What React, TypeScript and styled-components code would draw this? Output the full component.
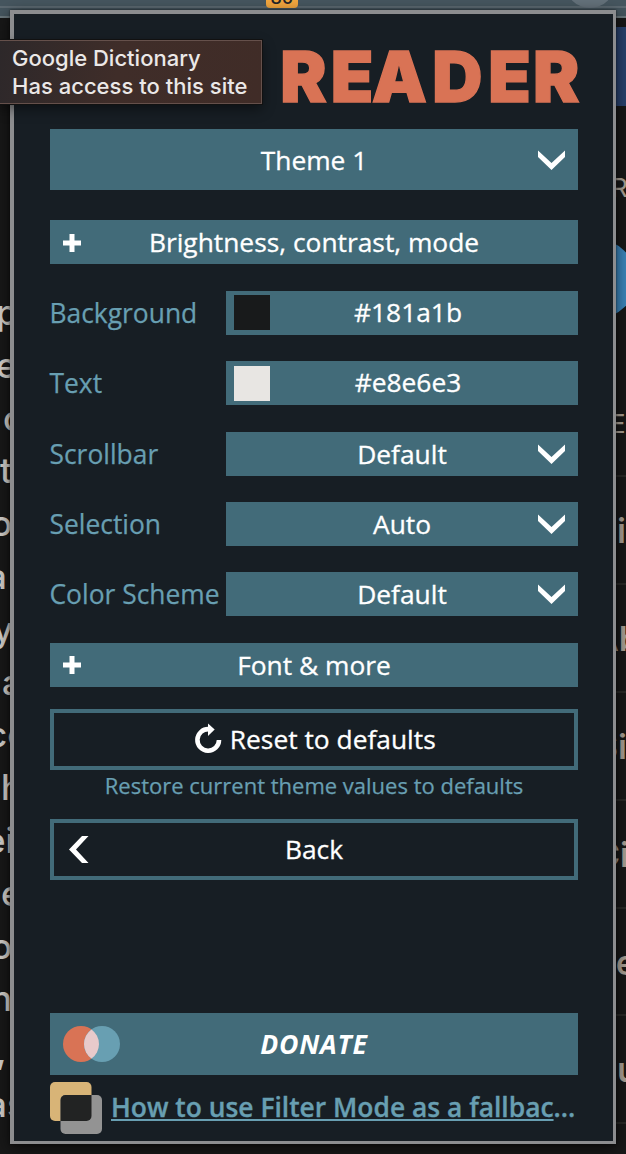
import React from 'react';
import styled, { createGlobalStyle } from 'styled-components';

const GlobalStyle = createGlobalStyle`
  * { box-sizing: border-box; }
  html, body { margin: 0; padding: 0; background: #181a1b; }
  body { overflow: hidden; }
`;

const teal = '#426b79';
const sky = '#689fb2';
const coral = '#d97355';

const Screen = styled.div`
  position: relative;
  width: 626px;
  height: 1154px;
  overflow: hidden;
  background: #181818;
  font-family: 'Open Sans', 'Noto Sans', sans-serif;
`;

const BrowserBar = styled.div`
  position: relative;
  height: 18px;
  background: linear-gradient(#46565f 0 6px, #5c6971 6px 8px, #45555e 8px 16px, #6a777c 16px 18px);
  overflow: hidden;
`;

const Badge = styled.div`
  position: absolute;
  left: 266px;
  top: -14px;
  width: 32px;
  height: 22px;
  border-radius: 4px;
  background: #f3a73f;
  color: #22252a;
  font: 500 18px/23px Inter, sans-serif;
  text-align: center;
`;

const Avatar = styled.div`
  position: absolute;
  left: 565px;
  top: -42px;
  width: 50px;
  height: 50px;
  border-radius: 50%;
  background: #64717a;
`;

const PageBody = styled.div`
  display: flex;
  justify-content: space-between;
  height: 1136px;
`;

const Article = styled.div`
  width: 30px;
  padding-top: 268px;
  overflow: hidden;
  color: #d1cdc7;
  font: 500 35px/52.8px Inter, sans-serif;
`;

const ArticleLine = styled.div<{ $shift: number }>`
  height: 52.8px;
  margin-left: ${(p) => p.$shift}px;
  white-space: nowrap;
`;

const Sidebar = styled.div`
  width: 30px;
  overflow: hidden;
  color: #a89f94;
  font-family: Inter, sans-serif;
`;

const BlueBanner = styled.div`
  height: 79px;
  margin-top: 9px;
  background: #29426e;
`;

const SideHeading = styled.div<{ $gap: number; $shift: number }>`
  height: 30px;
  margin: ${(p) => p.$gap}px 0 0 ${(p) => p.$shift}px;
  font-size: 26px;
  line-height: 30px;
  white-space: nowrap;
`;

const BlueDisc = styled.div`
  width: 80px;
  height: 80px;
  margin: 36px 0 0 -40px;
  border-radius: 50%;
  background: #3b84b9;
`;

const SideList = styled.div`
  margin-top: 36px;
`;

const SideItem = styled.div<{ $shift: number }>`
  height: 107.9px;
  border-top: 2px solid #292927;
  font-size: 34px;
  font-weight: 600;
  line-height: 107px;
  text-indent: ${(p) => p.$shift}px;
  white-space: nowrap;
`;

const Popup = styled.main`
  position: absolute;
  left: 10px;
  top: 10px;
  width: 606px;
  height: 1134px;
  padding: 32px 35px 0 36px;
  border: solid #8c8d8f;
  border-width: 4px 3px 3px 4px;
  background: #171e24;
  box-shadow: 0 0 2px #0009, 0 4px 14px #0009;
  display: flex;
  flex-direction: column;
`;

const Logo = styled.h1`
  height: 64px;
  margin: 0 0 19px;
  display: flex;
  justify-content: flex-end;
  color: ${coral};
  svg { display: block; overflow: visible; }
`;

const Button = styled.button<{ $height: number; $outline?: boolean; $gap: number }>`
  position: relative;
  flex: none;
  display: flex;
  align-items: center;
  justify-content: center;
  width: 100%;
  height: ${(p) => p.$height}px;
  margin: 0 0 ${(p) => p.$gap}px;
  padding: 0;
  border: ${(p) => (p.$outline ? `4px solid ${teal}` : '0')};
  background: ${(p) => (p.$outline ? '#171e24' : teal)};
  color: #fff;
  font: 400 26.35px/36px 'Open Sans', sans-serif;
  -webkit-text-stroke: 0.3px currentColor;
  white-space: nowrap;
`;

const IconSlot = styled.span<{ $left?: number; $right?: number }>`
  position: absolute;
  top: 0;
  bottom: 0;
  ${(p) => (p.$left !== undefined ? `left: ${p.$left}px;` : '')}
  ${(p) => (p.$right !== undefined ? `right: ${p.$right}px;` : '')}
  display: flex;
  align-items: center;
`;

const Settings = styled.div`
  display: flex;
  flex-direction: column;
  gap: 26.33px;
  margin-bottom: 26.6px;
`;

const Setting = styled.div`
  display: grid;
  grid-template-columns: 176px 352px;
  height: 44px;
`;

const Label = styled.label`
  margin-left: -0.5px;
  color: ${sky};
  font-size: 26.4px;
  line-height: 44px;
  -webkit-text-stroke: 0.25px currentColor;
  white-space: nowrap;
`;

const ColorField = styled.div`
  display: flex;
  height: 44px;
  padding-left: 8px;
  background: ${teal};
`;

const Swatch = styled.span<{ $color: string }>`
  width: 36px;
  height: 35px;
  margin-top: 4.4px;
  background: ${(p) => p.$color};
`;

const ColorValue = styled.span`
  flex: 1;
  padding-right: 32px;
  color: #fff;
  font-size: 26.35px;
  line-height: 43px;
  -webkit-text-stroke: 0.3px currentColor;
  text-align: center;
`;

const ResetIcon = styled.svg`
  margin: 0 7.5px 0 2px;
`;

const Hint = styled.p`
  height: 49px;
  margin: 0;
  color: ${sky};
  font-size: 22px;
  line-height: 31px;
  -webkit-text-stroke: 0.25px currentColor;
  text-align: center;
  white-space: nowrap;
`;

const Spacer = styled.div`
  flex: 1;
`;

const DonateText = styled.span`
  font-size: 26.6px;
  font-weight: 700;
  font-style: italic;
  letter-spacing: 0.8px;
  -webkit-text-stroke: 0;
`;

const NewsRow = styled.div`
  display: flex;
  height: 59px;
  gap: 9px;
`;

const NewsLink = styled.a`
  flex: 1;
  color: ${sky};
  font-size: 26.4px;
  font-weight: 600;
  line-height: 50px;
  -webkit-text-stroke: 0.35px currentColor;
  white-space: nowrap;
`;

const Underlined = styled.span`
  text-decoration: underline;
  text-decoration-thickness: 2px;
  text-underline-offset: 2px;
  text-decoration-skip-ink: none;
`;

const Tooltip = styled.div`
  position: absolute;
  left: -1px;
  top: 40px;
  width: 263px;
  height: 64px;
  padding: 3px 0 0 12px;
  border: 1px solid #65504b;
  background: linear-gradient(100deg, #2d282a, #3f2d29 45%, #402c27);
  box-shadow: 0 0 0 1px #111, 0 5px 12px #0007;
  color: #ebe8e7;
  font: 500 22px/28px Inter, sans-serif;
  white-space: nowrap;
`;

const TooltipLine = styled.div<{ $spacing: number }>`
  letter-spacing: ${(p) => p.$spacing}px;
`;

const Chevron = () => (
  <IconSlot $right={13}>
    <svg width="27" height="20" viewBox="0 0 27 20">
      <path d="M0 0.5L13.5 13L27 0.5V7L13.5 20L0 7Z" fill="#fff" />
    </svg>
  </IconSlot>
);

const Plus = () => (
  <IconSlot $left={13}>
    <svg width="18" height="19" viewBox="0 -1 18 19">
      <path d="M6.5 0H11.5V6.5H18V11.5H11.5V18H6.5V11.5H0V6.5H6.5Z" fill="#fff" />
    </svg>
  </IconSlot>
);

const articleLines: [string, number][] = [
  ['p', -4], ['e', -4], ['c', 3], ['t', 0], ['o', -9], ['a', -13], ['y', -7], ['a', 2],
  ['co', -13], ['h', 1], ['ei', -15], ['e', 1], ['o', -9], ['n', -9], [',', -4], ['as', -13],
];

const sideItems: [string, number][] = [
  ['Fi', 1], ['Ab', -2], ['Si', 0], ['Ci', -1], ['Re', -2], ['Pu', -1], ['', 0],
];

const colors: [string, string][] = [['Background', '#181a1b'], ['Text', '#e8e6e3']];
const selects: [string, string][] = [['Scrollbar', 'Default'], ['Selection', 'Auto'], ['Color Scheme', 'Default']];

export default function App() {
  return (
    <Screen>
      <GlobalStyle />
      <BrowserBar>
        <Badge>80</Badge>
        <Avatar />
      </BrowserBar>
      <PageBody>
        <Article>
          {articleLines.map(([text, shift], i) => (
            <ArticleLine key={i} $shift={shift}>{text}</ArticleLine>
          ))}
        </Article>
        <Sidebar>
          <BlueBanner />
          <SideHeading $gap={67} $shift={15}>R</SideHeading>
          <BlueDisc />
          <SideHeading $gap={90} $shift={14}>E</SideHeading>
          <SideList>
            {sideItems.map(([text, shift], i) => (
              <SideItem key={i} $shift={shift}>{text}</SideItem>
            ))}
          </SideList>
        </Sidebar>
      </PageBody>

      <Popup>
        <Logo>
          <svg width="300" height="64">
            <text x={[2.4, 53.3, 94.6, 155.8, 212.4, 257.6]} y="55.6" fill={coral} stroke={coral} strokeWidth="1.4"
              fontFamily="Inter" fontWeight="900" fontSize="70.2" transform="scale(0.99 1)">READER</text>
          </svg>
        </Logo>
        <Button $height={61} $gap={30}>Theme 1<Chevron /></Button>
        <Button $height={44} $gap={27}><Plus />Brightness, contrast, mode</Button>
        <Settings>
          {colors.map(([label, value]) => (
            <Setting key={label}>
              <Label>{label}</Label>
              <ColorField>
                <Swatch $color={value} />
                <ColorValue>{value}</ColorValue>
              </ColorField>
            </Setting>
          ))}
          {selects.map(([label, value]) => (
            <Setting key={label}>
              <Label>{label}</Label>
              <Button $height={44} $gap={0}>{value}<Chevron /></Button>
            </Setting>
          ))}
        </Settings>
        <Button $height={44} $gap={22}><Plus />Font &amp; more</Button>
        <Button $height={61} $gap={0} $outline>
          <ResetIcon width="28" height="32" viewBox="0 0 28 32">
            <path d="M15 6.2A10.8 10.8 0 1 0 25 17" fill="none" stroke="#fff" strokeWidth="4.6" />
            <path d="M14 0.5L20.7 6.5L14 13Z" fill="#fff" />
          </ResetIcon>
          Reset to defaults
        </Button>
        <Hint>Restore current theme values to defaults</Hint>
        <Button $height={61} $gap={0} $outline>
          <IconSlot $left={15}>
            <svg width="20" height="27" viewBox="0 0 20 27">
              <path d="M13 0H19.5L7 13.5L19.5 27H13L0 13.5Z" fill="#fff" />
            </svg>
          </IconSlot>
          Back
        </Button>
        <Spacer />
        <Button $height={62} $gap={7}>
          <IconSlot $left={13}>
            <svg width="57" height="36" viewBox="0 0 57 36">
              <circle cx="18" cy="18" r="18" fill={coral} />
              <circle cx="39" cy="18" r="18" fill={sky} />
              <path d="M28.5 3.4A18 18 0 0 1 28.5 32.6A18 18 0 0 1 28.5 3.4Z" fill="#e8cacb" />
            </svg>
          </IconSlot>
          <DonateText>DONATE</DonateText>
        </Button>
        <NewsRow>
          <svg width="52" height="52" viewBox="0 0 52 52">
            <rect width="41.5" height="39" rx="5" fill="#d8b477" />
            <rect x="10.5" y="13" width="41.5" height="39" rx="5" fill="#939393" />
            <path d="M15.5 13H41.5V34A5 5 0 0 1 36.5 39H10.5V18A5 5 0 0 1 15.5 13Z" fill="#222323" />
          </svg>
          <NewsLink><Underlined>How to use Filter Mode as a fallbac</Underlined>...</NewsLink>
        </NewsRow>
      </Popup>

      <Tooltip>
        <TooltipLine $spacing={0}>Google Dictionary</TooltipLine>
        <TooltipLine $spacing={0.02}>Has access to this site</TooltipLine>
      </Tooltip>
    </Screen>
  );
}
